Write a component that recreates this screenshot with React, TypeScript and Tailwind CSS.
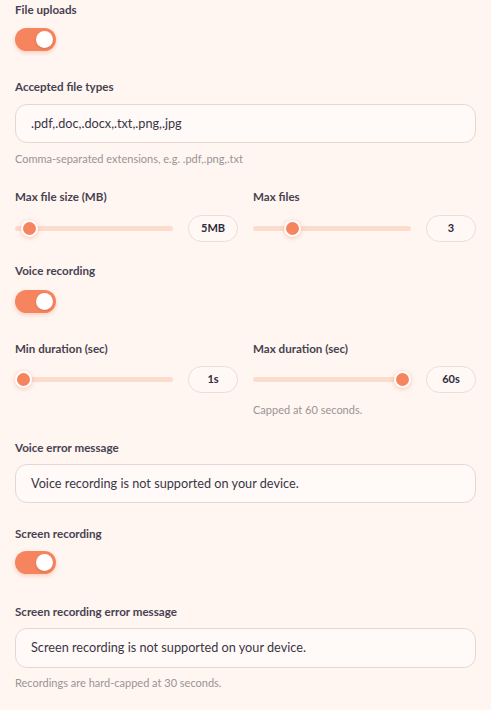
import React from "react";

function Toggle() {
  return (
    <div className="w-[41px] h-[23px] rounded-full bg-[#f6845e] flex items-center justify-end px-[3px] shadow-[0_2px_4px_rgba(246,132,94,0.35)]">
      <span className="w-[17px] h-[17px] rounded-full bg-white shadow-sm" />
    </div>
  );
}

function Slider({ value, min, max, unit }: { value: number; min: number; max: number; unit: string }) {
  const pct = (value - min) / (max - min);
  return (
    <div className="flex items-center gap-[15px]">
      <div className="relative flex-1 h-[27px] flex items-center">
        <div className="w-full h-[5px] rounded-full bg-[#fddbcd]" />
        <span
          className="absolute top-1/2 w-[17px] h-[17px] -mt-[8.5px] rounded-full bg-[#f6845e] border-2 border-white shadow-[0_1px_5px_rgba(246,132,94,0.45)]"
          style={{ left: `calc(${pct} * (100% - 17px))` }}
        />
      </div>
      <div className="w-[50px] h-[27px] rounded-full border border-[#efdcd5] bg-[#fff8f5] flex items-center justify-center text-[11px] font-bold text-[#2f2b3d]">
        {value}
        {unit}
      </div>
    </div>
  );
}

function Label({ children, className = "" }: { children: React.ReactNode; className?: string }) {
  return <div className={`text-[11.6px] leading-4 font-bold text-[#47424f] ${className}`}>{children}</div>;
}

function Help({ children, className = "" }: { children: React.ReactNode; className?: string }) {
  return <div className={`text-[11px] leading-4 text-[#9b9392] ${className}`}>{children}</div>;
}

function TextBox({ value, className = "" }: { value: string; className?: string }) {
  return (
    <div
      className={`h-[39px] rounded-[12px] border border-[#e8d7d1] bg-[#fffaf8] px-[15px] flex items-center text-[12.7px] text-[#3a3545] ${className}`}
    >
      {value}
    </div>
  );
}

export default function App() {
  return (
    <div className="w-[491px] h-[710px] bg-[#fff6f2] px-[15px] pt-[2px] font-['Lato','Inter',sans-serif] overflow-hidden">
      <Label>File uploads</Label>
      <div className="mt-[10px]">
        <Toggle />
      </div>

      <Label className="mt-[28px]">Accepted file types</Label>
      <TextBox className="mt-[9px]" value=".pdf,.doc,.docx,.txt,.png,.jpg" />
      <Help className="mt-[8px]">Comma-separated extensions, e.g. .pdf,.png,.txt</Help>

      <div className="mt-[22px] grid grid-cols-2 gap-x-[15px] items-start">
        <div>
          <Label>Max file size (MB)</Label>
          <div className="mt-[10px]">
            <Slider value={5} min={1} max={100} unit="MB" />
          </div>
        </div>
        <div>
          <Label>Max files</Label>
          <div className="mt-[10px]">
            <Slider value={3} min={1} max={10} unit="" />
          </div>
        </div>
      </div>

      <Label className="mt-[21px]">Voice recording</Label>
      <div className="mt-[11px]">
        <Toggle />
      </div>

      <div className="mt-[28px] grid grid-cols-2 gap-x-[15px] items-start">
        <div>
          <Label>Min duration (sec)</Label>
          <div className="mt-[9px]">
            <Slider value={1} min={1} max={60} unit="s" />
          </div>
        </div>
        <div>
          <Label>Max duration (sec)</Label>
          <div className="mt-[9px]">
            <Slider value={60} min={1} max={60} unit="s" />
          </div>
          <Help className="mt-[9px]">Capped at 60 seconds.</Help>
        </div>
      </div>

      <Label className="mt-[22px]">Voice error message</Label>
      <TextBox className="mt-[8px]" value="Voice recording is not supported on your device." />

      <Label className="mt-[23px]">Screen recording</Label>
      <div className="mt-[9px]">
        <Toggle />
      </div>

      <Label className="mt-[30px]">Screen recording error message</Label>
      <TextBox className="mt-[8px] h-[40px]" value="Screen recording is not supported on your device." />
      <Help className="mt-[7px]">Recordings are hard-capped at 30 seconds.</Help>
    </div>
  );
}
